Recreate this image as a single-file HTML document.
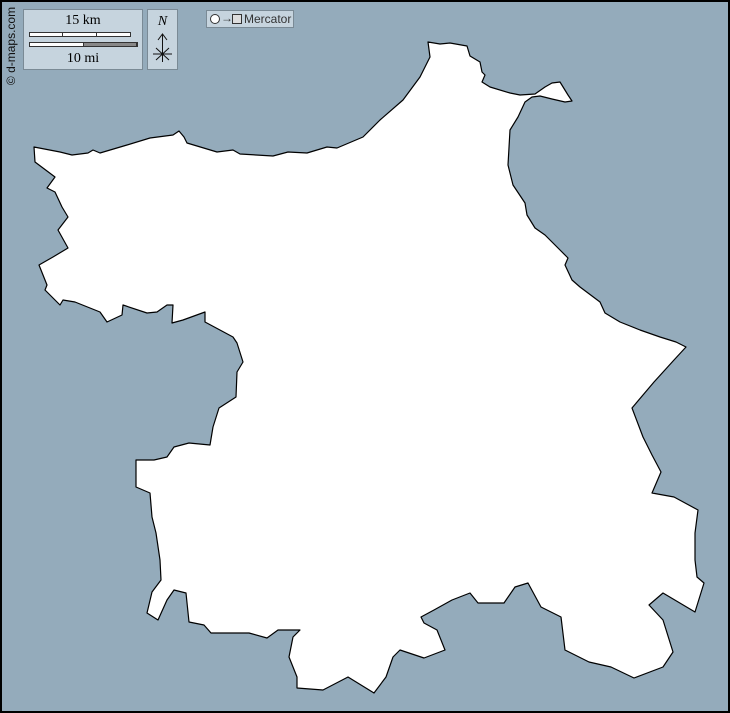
<!DOCTYPE html>
<html><head><meta charset="utf-8"><style>
html,body{margin:0;padding:0;}
body{width:730px;height:713px;position:relative;overflow:hidden;background:#94abbb;font-family:"Liberation Serif",serif;}
.frame{position:absolute;left:0;top:0;width:726px;height:709px;border:2px solid #000;}
.box{position:absolute;background:#c6d4de;border:1px solid #7a8a95;}
</style></head><body>
<svg width="730" height="713" style="position:absolute;left:0;top:0">
<polygon fill="#fff" stroke="#000" stroke-width="1.2" stroke-linejoin="round" points="
34,147 60,152 72,155 88,153 93,150 100,153 127,145 150,138 173,135 179,131 184,137 187,143 217,152 233,150 240,154 273,156 288,152 307,153 327,147 337,148 363,137 380,120 403,100 420,77 430,57 428,42
440,44 450,43 467,46 470,56 480,62 482,72 485,75 482,82 490,87 510,93 520,95 535,94 545,87 552,83 560,82 568,95 572,101 565,102 552,99 540,96 532,97 525,102 518,117 510,130 508,165 513,185 525,203 527,215 535,228 545,235 560,250 568,258 565,265 572,280 580,287 600,302 605,313 620,322 640,330 660,337 676,342 686,347
674,360 654,382 632,408 643,437 652,455 661,472 652,493 674,497 698,510 695,533 695,560 697,577 704,583 695,612 663,593 649,605 663,620 673,652 663,667 634,678 611,667 589,662 565,650 561,617 541,607 528,583 515,587 504,603 478,603 470,593 452,600 434,610 421,617 424,623 437,630 445,650 424,658 400,650 393,657 386,677 374,693 348,677 323,690 297,688 297,677 289,657 293,637 300,630 278,630 267,638 249,633 211,633 204,625 189,622 186,593 174,590 167,600 158,620 147,613 152,592 161,580 160,560 156,533 152,517 150,493 136,487 136,460 154,460 167,457 174,447 189,443 210,445 213,427 219,408 236,397 237,372 243,362 237,343
233,337 205,322 205,312 183,320 172,323 173,305 167,305 157,312 147,313 123,305 122,315 107,322 100,312 75,302 63,300 60,305 45,290 47,285 39,265 53,257 68,248 58,230 68,217 62,207 55,192 47,188 55,177 35,162"/>
</svg>
<div class="frame"></div>
<div style="position:absolute;left:3px;top:8px;width:16px;height:80px;">
<div style="position:absolute;left:8px;top:38px;transform:translate(-50%,-50%) rotate(-90deg);font-family:'Liberation Sans',sans-serif;font-size:12px;white-space:nowrap;color:#111;">© d-maps.com</div></div>
<div class="box" style="left:23px;top:9px;width:118px;height:59px;">
<div style="position:absolute;left:0;width:118px;top:3px;text-align:center;font-size:14px;">15 km</div>
<div style="position:absolute;left:5px;top:22px;width:100px;height:3px;border:1px solid #333;background:#fff;"></div>
<div style="position:absolute;left:38px;top:22px;width:1px;height:5px;background:#333"></div>
<div style="position:absolute;left:72px;top:22px;width:1px;height:5px;background:#333"></div>
<div style="position:absolute;left:5px;top:32px;width:107px;height:3px;border:1px solid #333;background:#fff;"></div>
<div style="position:absolute;left:59px;top:32px;width:54px;height:5px;background:#888;border:1px solid #333;box-sizing:border-box"></div>
<div style="position:absolute;left:0;width:118px;top:41px;text-align:center;font-size:14px;">10 mi</div>
</div>
<div class="box" style="left:147px;top:9px;width:29px;height:59px;">
<div style="position:absolute;left:0;width:29px;top:4px;text-align:center;font-size:14px;font-style:italic;">N</div>
<svg width="29" height="40" style="position:absolute;left:0;top:20px"><path d="M14.5 4V32M10 10L14.5 4 19 10M5 24H24M8 18L21 30M8 30L21 18" stroke="#111" fill="none" stroke-width="1"/></svg>
</div>
<div class="box" style="left:206px;top:10px;width:86px;height:16px;font-family:'Liberation Sans',sans-serif;font-size:12px;color:#333;">
<span style="position:absolute;left:3px;top:3px;width:8px;height:8px;border:1px solid #333;border-radius:50%;background:#fff"></span>
<span style="position:absolute;left:14px;top:0px;">→</span>
<span style="position:absolute;left:25px;top:3px;width:8px;height:8px;border:1px solid #333;background:#ddd"></span>
<span style="position:absolute;left:37px;top:1px;">Mercator</span>
</div>
</body></html>
